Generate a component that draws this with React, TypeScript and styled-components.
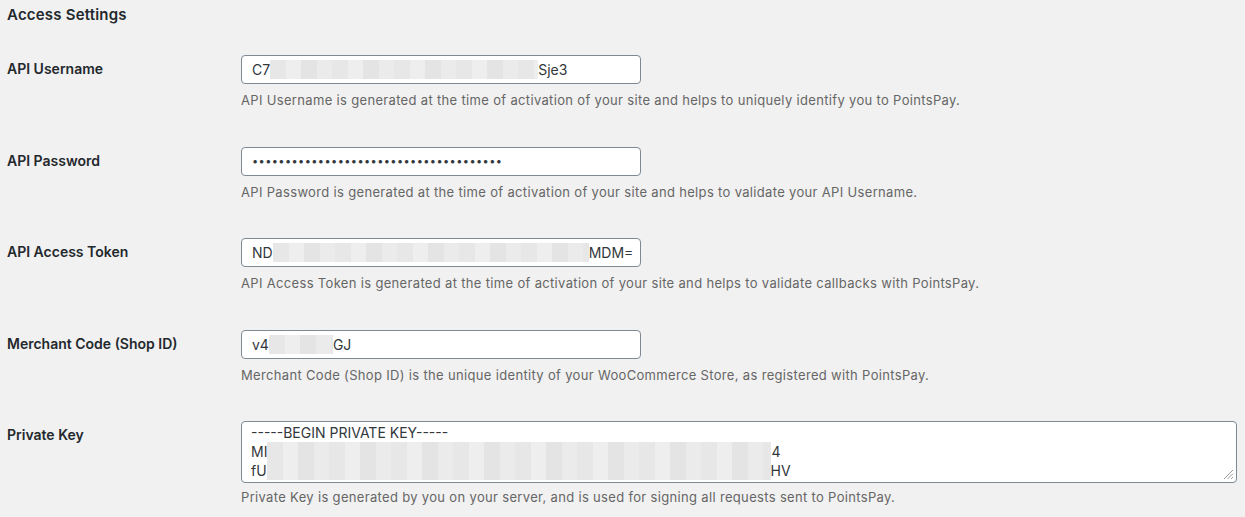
import styled, { createGlobalStyle } from "styled-components";

const GlobalStyle = createGlobalStyle`
  html, body {
    margin: 0;
    padding: 0;
    background: #f1f1f1;
  }
  body {
    font-family: Inter, "Noto Sans", "Liberation Sans", sans-serif;
    color: #23282d;
  }
`;

type Piece = string | { redact: number };

interface SettingRow {
  label: string;
  value: Piece[];
  description: string;
  password?: boolean;
}

const rows: SettingRow[] = [
  {
    label: "API Username",
    value: ["C7", { redact: 268 }, "Sje3"],
    description:
      "API Username is generated at the time of activation of your site and helps to uniquely identify you to PointsPay.",
  },
  {
    label: "API Password",
    value: ["•".repeat(38)],
    password: true,
    description:
      "API Password is generated at the time of activation of your site and helps to validate your API Username.",
  },
  {
    label: "API Access Token",
    value: ["ND", { redact: 316 }, "MDM="],
    description:
      "API Access Token is generated at the time of activation of your site and helps to validate callbacks with PointsPay.",
  },
  {
    label: "Merchant Code (Shop ID)",
    value: ["v4", { redact: 64 }, "GJ"],
    description:
      "Merchant Code (Shop ID) is the unique identity of your WooCommerce Store, as registered with PointsPay.",
  },
];

const keyLines: Piece[][] = [
  ["-----BEGIN PRIVATE KEY-----"],
  ["MI", { redact: 504 }, "4"],
  ["fU", { redact: 504 }, "HV"],
];

function renderPieces(pieces: Piece[]) {
  return pieces.map((p, i) =>
    typeof p === "string" ? <span key={i}>{p}</span> : <Redacted key={i} $w={p.redact} />
  );
}

function ResizeGrip() {
  return (
    <Grip width="11" height="11" viewBox="0 0 11 11">
      <line x1="10" y1="1" x2="1" y2="10" stroke="#9a9a9a" strokeWidth="1" />
      <line x1="10" y1="4.5" x2="4.5" y2="10" stroke="#9a9a9a" strokeWidth="1" />
      <line x1="10" y1="8" x2="8" y2="10" stroke="#9a9a9a" strokeWidth="1" />
    </Grip>
  );
}

export default function App() {
  return (
    <>
      <GlobalStyle />
      <Page>
        <Heading>Access Settings</Heading>
        <FormTable>
          {rows.map((row) => (
            <Row key={row.label}>
              <Label>{row.label}</Label>
              <Cell>
                <Field $password={row.password}>{renderPieces(row.value)}</Field>
                <Description>{row.description}</Description>
              </Cell>
            </Row>
          ))}
          <Row>
            <Label>Private Key</Label>
            <Cell>
              <TextArea>
                {keyLines.map((line, i) => (
                  <TextLine key={i}>{renderPieces(line)}</TextLine>
                ))}
                <ResizeGrip />
              </TextArea>
              <Description $gap={5}>
                Private Key is generated by you on your server, and is used for signing all requests sent to PointsPay.
              </Description>
            </Cell>
          </Row>
        </FormTable>
      </Page>
    </>
  );
}

const Page = styled.div`
  padding: 6px 8px 0 7px;
`;

const Heading = styled.h2`
  margin: 0;
  font-size: 15px;
  line-height: 18px;
  font-weight: 600;
  letter-spacing: 0.2px;
  color: #23282d;
`;

const FormTable = styled.div`
  margin-top: 16px;
  display: flex;
  flex-direction: column;
`;

const Row = styled.div`
  display: grid;
  grid-template-columns: 234px 1fr;
  padding: 15px 0 22.5px;
`;

const Label = styled.div`
  padding-top: 5px;
  font-size: 14px;
  line-height: 18px;
  font-weight: 600;
  color: #23282d;
`;

const Cell = styled.div`
  display: flex;
  flex-direction: column;
  align-items: flex-start;
`;

const Field = styled.div<{ $password?: boolean }>`
  box-sizing: border-box;
  width: 400px;
  height: 29px;
  padding: 0 10px;
  display: flex;
  align-items: center;
  background: #fff;
  border: 1px solid #7e8993;
  border-radius: 4px;
  font-size: ${({ $password }) => ($password ? "11px" : "14px")};
  letter-spacing: ${({ $password }) => ($password ? "0.4px" : "0")};
  color: #32373c;
  white-space: pre;
  overflow: hidden;
`;

const Redacted = styled.span<{ $w: number }>`
  display: inline-block;
  flex: none;
  width: ${({ $w }) => $w}px;
  height: 19px;
  background: repeating-linear-gradient(
    90deg,
    #e7e7e7 0 16px,
    #eeeeee 16px 31px,
    #e4e4e4 31px 47px,
    #ebebeb 47px 62px
  );
`;

const TextArea = styled.div`
  position: relative;
  box-sizing: border-box;
  width: 100%;
  height: 62px;
  padding: 1px 9px;
  background: #fff;
  border: 1px solid #7e8993;
  border-radius: 4px;
  font-size: 14px;
  line-height: 19px;
  color: #32373c;
  overflow: hidden;
`;

const TextLine = styled.div`
  display: flex;
  align-items: center;
  height: 19px;
  white-space: pre;
`;

const Grip = styled.svg`
  position: absolute;
  right: 2px;
  bottom: 2px;
`;

const Description = styled.p<{ $gap?: number }>`
  margin: ${({ $gap }) => $gap ?? 7}px 0 0;
  font-size: 13px;
  line-height: 18px;
  letter-spacing: 0.33px;
  color: #666;
`;
